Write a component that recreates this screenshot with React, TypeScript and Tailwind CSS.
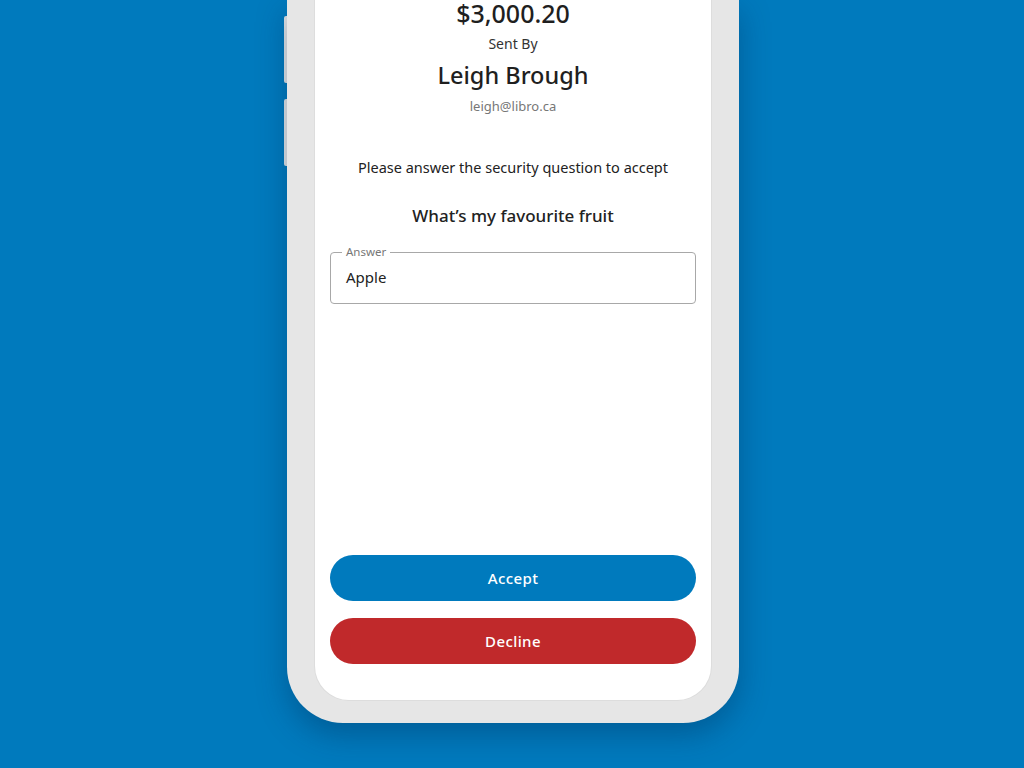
import React from "react";

export default function App() {
  return (
    <div
      className="flex h-[768px] w-[1024px] justify-center overflow-hidden bg-[#007abd]"
      style={{ fontFamily: '"Noto Sans", "Open Sans", sans-serif' }}
    >
      <div className="relative ml-[2px] h-[723px] w-[452px]">
        {/* side buttons */}
        <div className="absolute left-[-3px] top-[16px] h-[67px] w-[6px] rounded-l-[2px] bg-[#e6e6e6]" />
        <div className="absolute left-[-3px] top-[99px] h-[67px] w-[6px] rounded-l-[2px] bg-[#e6e6e6]" />

        <div className="relative h-full w-full rounded-b-[56px] bg-[#e6e6e6] px-[28px] pb-[23px] shadow-[0_12px_30px_rgba(0,40,80,0.35)]">
          <div className="flex h-[700px] flex-col items-center rounded-b-[34px] bg-white px-[15px] pb-[36px] text-center text-[#222] shadow-[0_0_0_1px_rgba(0,0,0,0.04)]">
            <div className="mt-[-2px] text-[25px] font-medium leading-[30px] text-[#1f1f1f]">$3,000.20</div>
            <div className="mt-[6px] text-[14px] leading-[20px] text-[#333]">Sent By</div>
            <div className="mt-[6px] text-[23.5px] font-medium leading-[30px] text-[#1f1f1f]">Leigh Brough</div>
            <div className="mt-[7px] text-[13px] leading-[18px] text-[#777]">leigh@libro.ca</div>

            <div className="mt-[42px] text-[14.5px] leading-[20px] text-[#222]">
              Please answer the security question to accept
            </div>
            <div className="mt-[27px] text-[17px] font-medium leading-[24px] text-[#222]">
              What’s my favourite fruit
            </div>

            <div className="relative mt-[24px] flex h-[52px] w-full items-center rounded-[4px] border border-[#a8a8a8] px-[15px] pb-[2px] text-left">
              <span className="absolute left-[11px] top-[-8px] bg-white px-[4px] text-[11.5px] leading-[14px] text-[#777]">
                Answer
              </span>
              <span className="text-[15px] text-[#222]">Apple</span>
            </div>

            <div className="flex-1" />

            <button className="h-[46px] w-full rounded-full bg-[#007abd] text-[15px] font-medium tracking-[0.4px] text-white">
              Accept
            </button>
            <button className="mt-[17px] h-[46px] w-full rounded-full bg-[#c0292b] text-[15px] font-medium tracking-[0.4px] text-white">
              Decline
            </button>
          </div>
        </div>
      </div>
    </div>
  );
}
